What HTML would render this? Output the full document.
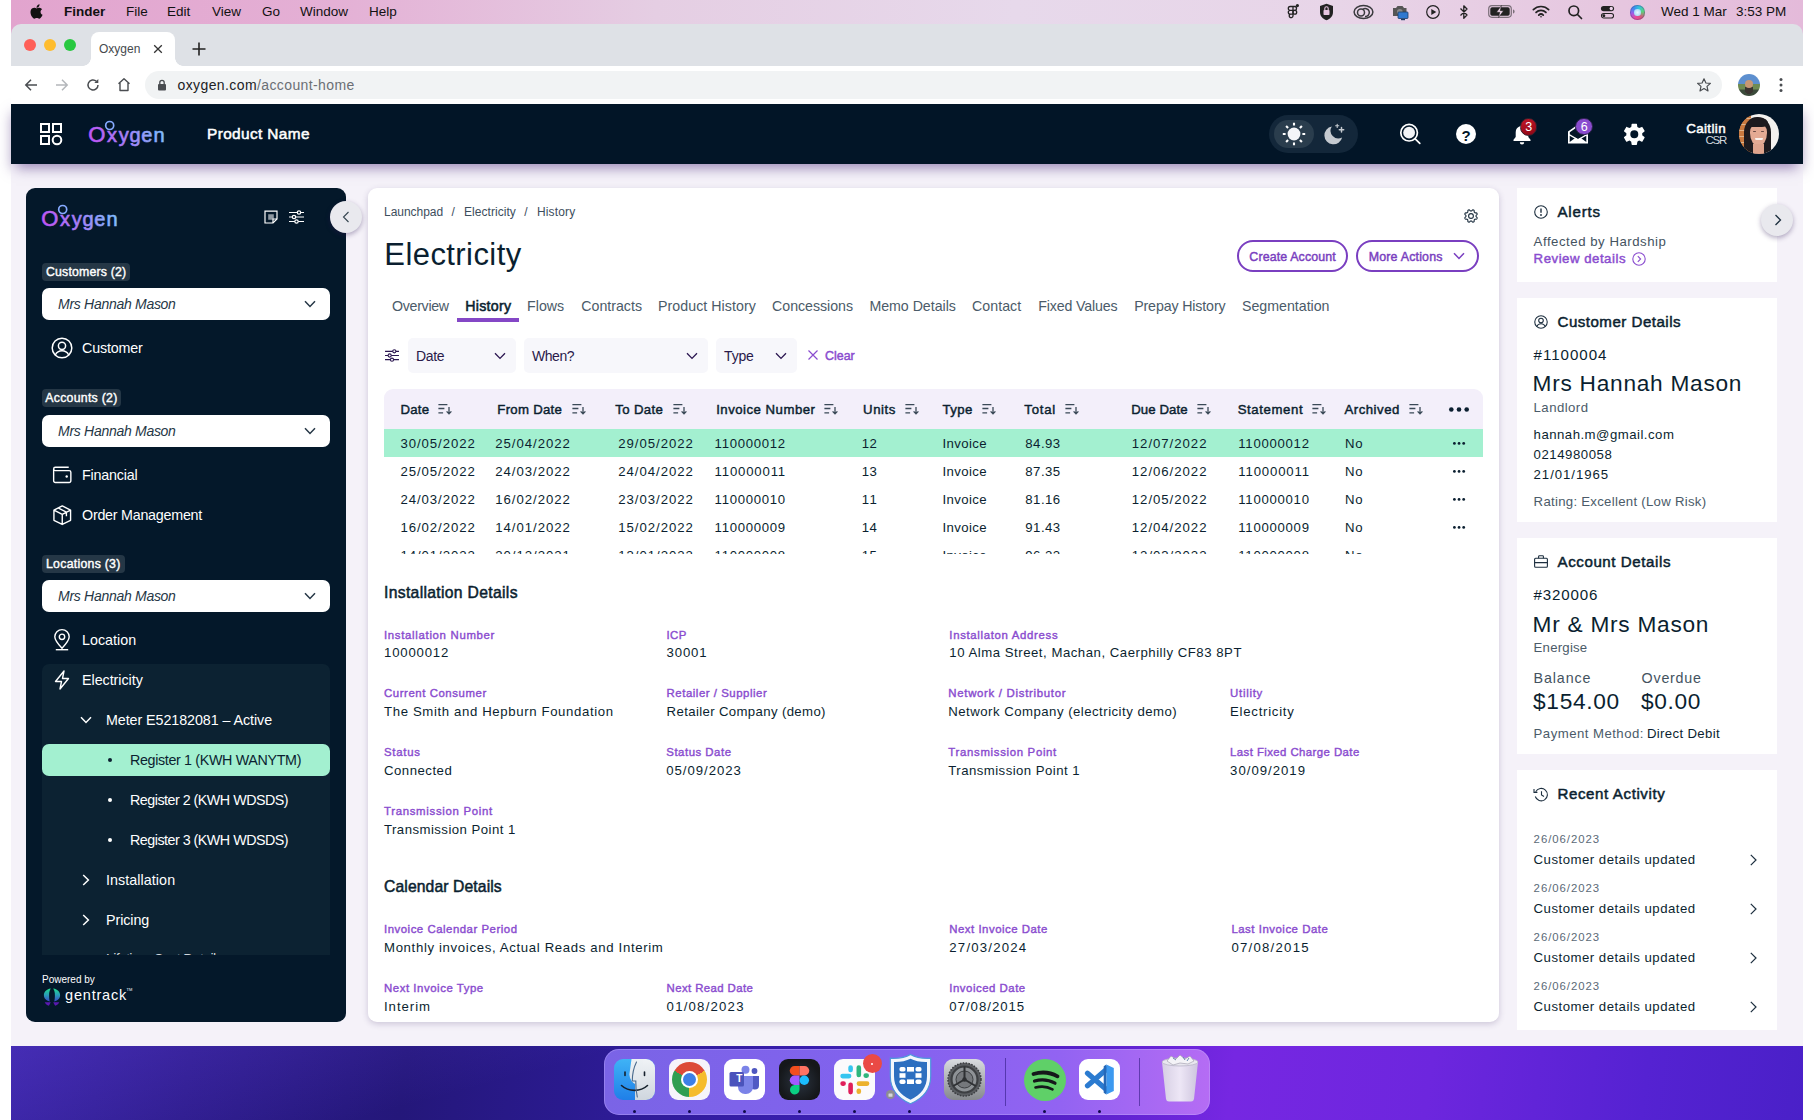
<!DOCTYPE html>
<html lang="en">
<head>
<meta charset="utf-8">
<title>Oxygen</title>
<style>
*{box-sizing:border-box;margin:0;padding:0}
html,body{width:1814px;height:1120px;overflow:hidden;background:#fff}
body{position:relative;font-family:"Liberation Sans",sans-serif;color:#0b1f30;font-size:14px;-webkit-font-smoothing:antialiased}
.a{position:absolute;white-space:nowrap}
.t{position:absolute;white-space:nowrap;line-height:1;transform:translateY(-50%)}
svg{position:absolute;overflow:visible}
#screen{position:absolute;left:11px;top:0;width:1792px;height:1120px;overflow:hidden;background:#f5f2f9}
/* mac menu */
#menubar{left:11px;top:0;width:1792px;height:24px;background:linear-gradient(90deg,#e2a4ce 0%,#e4b0d5 18%,#e5cee3 36%,#e7d9eb 56%,#e8d5e8 74%,#e6c6df 90%,#e4bada 100%)}
.mm{font-size:13.5px;color:#111;top:12px}
/* chrome */
#tabbar{left:11px;top:24px;width:1792px;height:42px;background:#dee1e6;border-radius:10px 10px 0 0}
#addr{left:11px;top:66px;width:1792px;height:38px;background:#fff}
#apphead{left:11px;top:104px;width:1792px;height:60px;background:#021527;box-shadow:0 9px 12px -5px rgba(80,50,130,.55)}
/* sidebar */
#side{left:26px;top:188px;width:320px;height:834px;background:#04182a;border-radius:9px}
.badge{position:absolute;height:18px;border-radius:4px;background:#253746;color:#fff;-webkit-text-stroke:.4px;font-size:12.3px;line-height:18px;padding:0 4px;white-space:nowrap}
.sel{position:absolute;left:42px;width:288px;height:32px;border-radius:7px;background:#fff}
.sel span{position:absolute;left:16px;top:16px;transform:translateY(-50%);font-style:italic;font-size:14px;color:#263746;line-height:1;white-space:nowrap}
.nav{color:#fff;font-size:14.3px;margin-top:.2px}
/* main */
#main{left:368px;top:188px;width:1131px;height:834px;background:#fff;border-radius:9px;box-shadow:0 2px 6px rgba(60,40,100,.22)}
.tab{font-size:14.2px;color:#4b5b69;top:306px}
.fsel{position:absolute;top:338px;height:34.7px;border-radius:5px;background:#f7f7fb}
.fsel span{position:absolute;left:8px;top:17.7px;transform:translateY(-50%);white-space:nowrap;font-size:14px;color:#2a1a4a;line-height:1}
.th{margin-top:.5px;-webkit-text-stroke:.45px;font-size:13.2px;color:#0b1f30}
.td{margin-top:.5px;font-size:13.2px;color:#0b1f30}
.lb{margin-top:.5px;font-size:11.4px;-webkit-text-stroke:.4px;color:#8a4ccf}
.vl{margin-top:.5px;font-size:13.2px;color:#0b1f30}
.h2{font-size:15.7px;-webkit-text-stroke:.5px;color:#0b1f30}
/* right */
.card{position:absolute;left:1517px;width:260px;background:#fff}
.ch{font-size:15.1px;-webkit-text-stroke:.5px;color:#0b1f30}
.gr{color:#4b5b69}
</style>
</head>
<body>
<div class="a" style="left:13px;top:108px;width:1788px;height:54px;box-shadow:0 6px 12px 1px rgba(80,50,130,.5)"></div>
<div id="screen"><div id="in" class="a" style="left:-11px;top:0;width:1814px;height:1120px">

<div id="menubar" class="a"></div>
<svg style="left:29px;top:3px" width="15" height="17" viewBox="0 0 170 170"><path fill="#111" d="M150.37 130.25c-2.45 5.66-5.35 10.87-8.71 15.66-4.58 6.53-8.33 11.05-11.22 13.56-4.48 4.12-9.28 6.23-14.42 6.35-3.69 0-8.14-1.05-13.32-3.18-5.197-2.12-9.973-3.17-14.34-3.17-4.58 0-9.492 1.05-14.746 3.17-5.262 2.13-9.501 3.24-12.742 3.35-4.929.21-9.842-1.96-14.746-6.52-3.13-2.73-7.045-7.41-11.735-14.04-5.032-7.08-9.169-15.29-12.41-24.65-3.471-10.11-5.211-19.9-5.211-29.378 0-10.857 2.346-20.221 7.045-28.068 3.693-6.303 8.606-11.275 14.755-14.925s12.793-5.51 19.948-5.629c3.915 0 9.049 1.211 15.429 3.591 6.362 2.388 10.447 3.599 12.238 3.599 1.339 0 5.877-1.416 13.57-4.239 7.275-2.618 13.415-3.702 18.445-3.275 13.63 1.1 23.87 6.473 30.68 16.153-12.19 7.386-18.22 17.731-18.1 31.002.11 10.337 3.86 18.939 11.23 25.769 3.34 3.17 7.07 5.62 11.22 7.36-.9 2.61-1.85 5.11-2.86 7.51zM119.11 7.24c0 8.102-2.96 15.667-8.86 22.669-7.12 8.324-15.732 13.134-25.071 12.375a25.222 25.222 0 0 1-.188-3.07c0-7.778 3.386-16.102 9.399-22.908 3.002-3.446 6.82-6.311 11.45-8.597 4.62-2.252 8.99-3.497 13.1-3.71.12 1.083.17 2.166.17 3.24z"/></svg>
<span class="t mm" style="left:64px;font-weight:bold">Finder</span>
<span class="t mm" style="left:126px">File</span>
<span class="t mm" style="left:167px">Edit</span>
<span class="t mm" style="left:212px">View</span>
<span class="t mm" style="left:262px">Go</span>
<span class="t mm" style="left:300px">Window</span>
<span class="t mm" style="left:369px">Help</span>
<!-- menubar status icons -->
<svg style="left:1284px;top:3px" width="18" height="18" viewBox="0 0 18 18" fill="none" stroke="#222" stroke-width="1.3"><path d="M9 3.5H6.2a1.9 1.9 0 0 0 0 3.8H9zM9 3.5h1.6a1.9 1.9 0 0 1 0 3.8H9M9 7.3H6.2a1.9 1.9 0 0 0 0 3.8H9zM9 11.1H6.2A1.9 1.9 0 1 0 9 13z"/><circle cx="10.8" cy="9.2" r="1.9"/><circle cx="13.4" cy="2.6" r="1.6" fill="#222" stroke="none"/></svg>
<svg style="left:1318px;top:3px" width="17" height="18" viewBox="0 0 17 18"><path d="M8.5 0.8 15 3v6c0 4.2-3 7-6.5 8.3C5 16 2 13.2 2 9V3z" fill="#222"/><rect x="5.5" y="7" width="6" height="5" rx=".8" fill="#e7c5e0"/><path d="M6.8 7V5.5a1.7 1.7 0 0 1 3.4 0V7" fill="none" stroke="#e7c5e0" stroke-width="1.1"/></svg>
<svg style="left:1353px;top:4px" width="21" height="16" viewBox="0 0 21 16" fill="none" stroke="#3a3a3e" stroke-width="1.5"><ellipse cx="10.5" cy="8" rx="9.4" ry="6.6"/><circle cx="8" cy="8.4" r="3.5"/><path d="M9.7 5.5a4 4 0 1 1 2.3 7"/></svg>
<svg style="left:1390px;top:3px" width="20" height="18" viewBox="0 0 20 18"><path d="M3 5h3l1.5-2h5L14 5h2.5v8H3z" fill="#555"/><circle cx="9.8" cy="8.8" r="2.8" fill="#8a8a8a"/><rect x="8" y="9" width="10" height="6.5" rx=".8" fill="#2f78d0" stroke="#1d3c66" stroke-width=".8"/><rect x="11" y="16" width="4" height="1.2" fill="#1d3c66"/></svg>
<svg style="left:1425px;top:4px" width="16" height="16" viewBox="0 0 16 16"><circle cx="8" cy="8" r="6.3" fill="none" stroke="#222" stroke-width="1.2"/><path d="M6.3 5v6l5-3z" fill="#222"/></svg>
<svg style="left:1459px;top:3px" width="10" height="18" viewBox="0 0 10 18" fill="none" stroke="#222" stroke-width="1.3" stroke-linejoin="round"><path d="M1.5 5.5 8 12l-3.2 3.2V2.8L8 6l-6.5 6.5"/></svg>
<svg style="left:1488px;top:5px" width="28" height="14" viewBox="0 0 28 14"><rect x=".7" y=".7" width="22.6" height="11.6" rx="3.2" fill="none" stroke="#222" stroke-width="1.2" opacity=".55"/><rect x="2.3" y="2.3" width="19.4" height="8.4" rx="1.8" fill="#222"/><path d="M25 4.5v4c1.2-.3 1.6-1.2 1.6-2s-.4-1.7-1.6-2z" fill="#222" opacity=".55"/><path d="M13.5.5 8.5 7.3h3.3L10.5 12.5l5-6.8h-3.3z" fill="#f0d6ea" stroke="#222" stroke-width=".5"/></svg>
<svg style="left:1532px;top:4.5px" width="18" height="13.5" viewBox="0 0 20 15" fill="none" stroke="#222" stroke-width="1.9" stroke-linecap="round"><path d="M1.5 5.2a12 12 0 0 1 17 0"/><path d="M4.5 8.3a7.8 7.8 0 0 1 11 0"/><path d="M7.5 11.2a3.6 3.6 0 0 1 5 0" /><circle cx="10" cy="13" r=".9" fill="#222" stroke="none"/></svg>
<svg style="left:1567px;top:4px" width="16" height="16" viewBox="0 0 16 16" fill="none" stroke="#222" stroke-width="1.7" stroke-linecap="round"><circle cx="6.8" cy="6.8" r="4.8"/><path d="M10.5 10.5 14.5 14.5"/></svg>
<svg style="left:1600px;top:5px" width="15" height="14" viewBox="0 0 17 16"><rect x="1" y="1" width="15" height="6" rx="3" fill="#222"/><circle cx="12.8" cy="4" r="1.9" fill="#ecd3ea"/><rect x="1.6" y="9.6" width="13.8" height="5.2" rx="2.6" fill="none" stroke="#222" stroke-width="1.2"/><circle cx="4.3" cy="12.2" r="1.7" fill="#222"/></svg>
<div class="a" style="left:1630px;top:5px;width:14.5px;height:14.5px;border-radius:50%;background:conic-gradient(from 200deg,#e94a9a,#a05be8,#3a8df0,#35c8d8,#5ad37a,#d8567a,#e94a9a);box-shadow:inset 0 0 0 1px rgba(80,50,120,.35)"></div>
<div class="a" style="left:1634px;top:9px;width:6.5px;height:6.5px;border-radius:50%;background:radial-gradient(circle,#e8f6ff,#8fd0f4)"></div>
<span class="t mm" style="left:1661px">Wed 1 Mar</span>
<span class="t mm" style="left:1736px">3:53 PM</span>
<!-- chrome -->
<div class="a" style="left:11px;top:24px;width:1792px;height:12px;background:linear-gradient(90deg,#e2a4ce 0%,#e4b0d5 18%,#e5cee3 36%,#e7d9eb 56%,#e8d5e8 74%,#e6c6df 90%,#e4bada 100%)"></div>
<div id="tabbar" class="a"></div>
<div class="a" style="left:24px;top:39px;width:12px;height:12px;border-radius:50%;background:#fe5f57"></div>
<div class="a" style="left:44px;top:39px;width:12px;height:12px;border-radius:50%;background:#febc2e"></div>
<div class="a" style="left:64px;top:39px;width:12px;height:12px;border-radius:50%;background:#28c840"></div>
<div class="a" style="left:91px;top:32px;width:84px;height:34px;background:#fff;border-radius:8px 8px 0 0"></div>
<div class="a" style="left:83px;top:58px;width:8px;height:8px;background:radial-gradient(circle at 0 0,#dee1e6 7.5px,#fff 8px)"></div>
<div class="a" style="left:175px;top:58px;width:8px;height:8px;background:radial-gradient(circle at 100% 0,#dee1e6 7.5px,#fff 8px)"></div>
<span class="t" style="left:99px;top:49px;font-size:12px;color:#45494d">Oxygen</span>
<svg style="left:153px;top:44px" width="10" height="10" viewBox="0 0 10 10" stroke="#333" stroke-width="1.3"><path d="M1.2 1.2 8.8 8.8M8.8 1.2 1.2 8.8"/></svg>
<svg style="left:192px;top:42px" width="14" height="14" viewBox="0 0 14 14" stroke="#222" stroke-width="1.6"><path d="M7 .5v13M.5 7h13"/></svg>
<div id="addr" class="a"></div>
<svg style="left:24px;top:78px" width="14" height="14" viewBox="0 0 14 14" fill="none" stroke="#4a4d51" stroke-width="1.5"><path d="M13 7H2M7 1.8 1.8 7 7 12.2"/></svg>
<svg style="left:55px;top:78px" width="14" height="14" viewBox="0 0 14 14" fill="none" stroke="#b4b7bb" stroke-width="1.5"><path d="M1 7h11M7 1.8 12.2 7 7 12.2"/></svg>
<svg style="left:86px;top:78px" width="14" height="14" viewBox="0 0 14 14" fill="none" stroke="#4a4d51" stroke-width="1.5"><path d="M12 7a5 5 0 1 1-1.6-3.7"/><path d="M12.3 1v4h-4z" fill="#4a4d51" stroke="none"/></svg>
<svg style="left:117px;top:77px" width="14" height="15" viewBox="0 0 14 15" fill="none" stroke="#4a4d51" stroke-width="1.4" stroke-linejoin="round"><path d="M1.5 6.8 7 1.8l5.5 5M3 6v7.5h8V6"/></svg>
<div class="a" style="left:145px;top:71px;width:1577px;height:28px;border-radius:14px;background:#f1f3f4"></div>
<svg style="left:157px;top:79px" width="10" height="12" viewBox="0 0 10 12"><rect x="1" y="5" width="8" height="6.5" rx="1" fill="#4a4d51"/><path d="M2.8 5V3.5a2.2 2.2 0 0 1 4.4 0V5" fill="none" stroke="#4a4d51" stroke-width="1.3"/></svg>
<span class="t" style="left:177.5px;top:85px;font-size:14px;color:#202124;letter-spacing:0.396px">oxygen.com<span style="color:#6b6f74">/account-home</span></span>
<svg style="left:1696px;top:77px" width="16" height="16" viewBox="0 0 16 16" fill="none" stroke="#4a4d51" stroke-width="1.2" stroke-linejoin="round"><path d="M8 1.8 9.9 6l4.5.4-3.4 3 1 4.5L8 11.5 4 13.9l1-4.5L1.6 6.4 6.1 6z"/></svg>
<div class="a" style="left:1738px;top:74px;width:22px;height:22px;border-radius:50%;background:radial-gradient(circle at 50% 72%,#3a3430 0 22%,transparent 23%),linear-gradient(#5d8fcf 0 45%,#6f8b52 46% 70%,#3b4a3a 71%)"></div>
<div class="a" style="left:1745px;top:80px;width:8px;height:8px;border-radius:50%;background:#c99874"></div>
<svg style="left:1779px;top:77px" width="4" height="16" viewBox="0 0 4 16" fill="#4a4d51"><circle cx="2" cy="2.5" r="1.5"/><circle cx="2" cy="8" r="1.5"/><circle cx="2" cy="13.5" r="1.5"/></svg>
<!--OSCHROME-->

<div id="apphead" class="a"></div>
<svg style="left:39px;top:122px" width="24" height="24" viewBox="0 0 24 24" fill="none" stroke="#fff" stroke-width="2"><rect x="2" y="2" width="8" height="8"/><rect x="14" y="2" width="8" height="8"/><rect x="2" y="14" width="8" height="8"/><circle cx="18" cy="18" r="4.3"/></svg>
<svg style="left:86px;top:116px" width="84" height="36" viewBox="86 116 84 36"><defs><linearGradient id="og" gradientUnits="userSpaceOnUse" x1="88" y1="150" x2="164" y2="122"><stop offset="0" stop-color="#c44df2"/><stop offset=".45" stop-color="#a87cf7"/><stop offset="1" stop-color="#7cc4ff"/></linearGradient></defs>
<text x="88.3 107 118.7 129.6 141.3 153.4" y="141.6" font-family="Liberation Sans, sans-serif" font-size="20" fill="url(#og)" stroke="url(#og)" stroke-width=".6"><tspan font-size="22">O</tspan>xygen</text>
<circle cx="109.7" cy="125.5" r="4" fill="none" stroke="#86aaff" stroke-width="1.7"/></svg>
<span class="t" style="left:207px;top:134px;font-size:15.4px;-webkit-text-stroke:.5px;color:#fff;letter-spacing:0.375px">Product Name</span>
<!-- theme toggle -->
<div class="a" style="left:1269px;top:115px;width:89px;height:38px;border-radius:19px;background:#13273a"></div>
<div class="a" style="left:1274px;top:119.7px;width:40px;height:28.8px;border-radius:14.4px;background:#2a3d4d"></div>
<svg style="left:1282px;top:122px" width="24" height="24" viewBox="-12 -12 24 24" stroke="#fff" stroke-width="2.1"><circle r="6.4" fill="#f4f5f8" stroke="none"/><path d="M0-8.4V-11.2M0 8.4V11.2M-8.4 0H-11.2M8.4 0H11.2M-5.9-5.9-7.9-7.9M5.9-5.9 7.9-7.9M-5.9 5.9-7.9 7.9M5.9 5.9 7.9 7.9"/></svg>
<svg style="left:1322px;top:122px" width="24" height="24" viewBox="-12 -12 24 24"><path d="M-2.2-7.560A9 9 0 1 0 8.140 3.440 7.8 7.8 0 0 1-2.2-7.560z" fill="#c5cad0"/><path d="M3.2-9.8v3.2M1.6-8.2h3.2" stroke="#c5cad0" stroke-width="1.1" stroke-linecap="round"/><path d="M7.5-6.4v4.4M5.3-4.2h4.4" stroke="#c5cad0" stroke-width="1.5" stroke-linecap="round"/></svg>
<svg style="left:1398px;top:122px" width="24" height="24" viewBox="-12 -12 24 24" fill="none" stroke="#fff"><circle cx="-.9" cy="-1.3" r="8.3" stroke-width="1.7"/><circle cx="-.9" cy="-1.3" r="5.9" fill="#f2f3f6" stroke="none"/><path d="M5.2 4.8 9.8 9.4" stroke-width="1.7" stroke-linecap="round"/></svg>
<div class="a" style="left:1456px;top:124px;width:20px;height:20px;border-radius:50%;background:#fff"></div>
<span class="t" style="left:1461.5px;top:134.5px;font-size:15px;font-weight:bold;color:#021527">?</span>
<svg style="left:1510px;top:122px" width="24" height="24" viewBox="-12 -12 24 24" fill="#fff"><path d="M0-9.5c.9 0 1.5.6 1.5 1.4 3 .8 4.8 3.2 4.8 6.3V3L8.5 5.8V7H-8.5V5.8L-6.3 3V-1.8c0-3.1 1.8-5.5 4.8-6.3 0-.8.6-1.4 1.5-1.4zM-2.2 8.3h4.4a2.2 2.2 0 0 1-4.4 0z"/></svg>
<div class="a" style="left:1519.7px;top:117.9px;width:17.8px;height:17.8px;border-radius:50%;background:linear-gradient(160deg,#c4182a,#8c0514);border:1.2px solid #35222e"></div>
<span class="t" style="left:1525.3px;top:127px;font-size:12.5px;color:#fff">3</span>
<svg style="left:1566px;top:122px" width="24" height="24" viewBox="-12 -12 24 24" fill="#fff"><path d="M-10-2.5 0-9.5 10-2.5V9.5H-10zM-8.2-1.8V.2L0 5 8.2.2V-1.8L0-7.5z" fill-rule="evenodd"/><path d="M-8.3 1.8 0 6.6 8.3 1.8V8H-8.3z" fill="#021527"/><path d="M-8.3 8 -2.5 3.8 0 5.2 2.5 3.8 8.3 8z" fill="#fff"/></svg>
<div class="a" style="left:1575.2px;top:117.7px;width:17.8px;height:17.8px;border-radius:50%;background:#8a4ccf;border:1.2px solid #2a2148"></div>
<span class="t" style="left:1580.7px;top:126.8px;font-size:12.5px;color:#fff">6</span>
<svg style="left:1620.7px;top:120.9px" width="26.6" height="26.6" viewBox="0 0 24 24"><path fill="#fff" d="M19.14 12.94c.04-.3.06-.61.06-.94 0-.32-.02-.64-.07-.94l2.03-1.58a.49.49 0 0 0 .12-.61l-1.92-3.32a.488.488 0 0 0-.59-.22l-2.39.96c-.5-.38-1.03-.7-1.62-.94l-.36-2.54a.484.484 0 0 0-.48-.41h-3.84c-.24 0-.43.17-.47.41l-.36 2.54c-.59.24-1.13.57-1.62.94l-2.39-.96c-.22-.08-.47 0-.59.22L2.74 8.87c-.12.21-.08.47.12.61l2.03 1.58c-.05.3-.09.63-.09.94s.02.64.07.94l-2.03 1.58a.49.49 0 0 0-.12.61l1.92 3.32c.12.22.37.29.59.22l2.39-.96c.5.38 1.03.7 1.62.94l.36 2.54c.05.24.24.41.48.41h3.84c.24 0 .44-.17.47-.41l.36-2.54c.59-.24 1.13-.56 1.62-.94l2.39.96c.22.08.47 0 .59-.22l1.92-3.32c.12-.22.07-.47-.12-.61l-2.01-1.58zM12 15.6A3.6 3.6 0 1 1 12 8.4a3.6 3.6 0 0 1 0 7.2z"/></svg>
<span class="t" style="right:88px;top:128.7px;font-size:13.4px;-webkit-text-stroke:.5px;color:#fff;letter-spacing:0.380px">Caitlin</span>
<span class="t" style="right:88px;top:140.7px;font-size:11.5px;color:#d4d9df;letter-spacing:-1.291px">CSR</span>
<div class="a" style="left:1739px;top:114px;width:40px;height:40px;border-radius:50%;overflow:hidden;background:linear-gradient(90deg,#c47a45 0 30%,#f3f1ef 30% 100%)">
<div class="a" style="left:0;top:0;width:12px;height:40px;background:repeating-linear-gradient(0deg,#c9793f 0 5px,#e0b48a 5px 6px)"></div>
<div class="a" style="left:5px;top:2.5px;width:26.5px;height:44px;border-radius:13px 13px 4px 4px / 15px 15px 4px 4px;background:#1d1a1e"></div>
<div class="a" style="left:11px;top:9px;width:17px;height:23px;border-radius:8px 8px 8.5px 8.5px / 9px 9px 13px 13px;background:#e4aa93"></div>
<div class="a" style="left:10px;top:4px;width:19px;height:8.5px;border-radius:10px 10px 9px 2px / 8px 8px 5px 2px;background:#1d1a1e"></div>
<div class="a" style="left:14px;top:30px;width:11px;height:12px;background:#dfa48d"></div>
<div class="a" style="left:16px;top:23.5px;width:7.5px;height:2.6px;border-radius:1px 1px 4px 4px;background:#fbf3ee"></div>
<div class="a" style="left:14px;top:17px;width:3px;height:1.4px;background:#6a4a44;border-radius:1px"></div><div class="a" style="left:22px;top:17px;width:3px;height:1.4px;background:#6a4a44;border-radius:1px"></div>
</div>
<!--APPHEAD-->

<div id="side" class="a"></div>
<svg style="left:39.2px;top:199.7px" width="84" height="36" viewBox="86 116 84 36"><text x="88.3 107 118.7 129.6 141.3 153.4" y="141.6" font-family="Liberation Sans, sans-serif" font-size="20" fill="url(#og)" stroke="url(#og)" stroke-width=".6"><tspan font-size="22">O</tspan>xygen</text>
<circle cx="109.7" cy="125.5" r="4" fill="none" stroke="#86aaff" stroke-width="1.7"/></svg>
<svg style="left:264px;top:210px" width="14" height="14" viewBox="0 0 14 14" fill="none" stroke="#fff" stroke-width="1.2"><path d="M1 1.2h12v7.8L9 13H1z"/><path d="M4.2 4.2h5.6v4.2L8.4 9.8H4.2z" fill="#8f98a1" stroke="none"/><path d="M13 9H9v4" /></svg>
<svg style="left:289px;top:210px" width="15" height="14" viewBox="0 0 15 14" fill="none" stroke="#fff" stroke-width="1.2"><path d="M0 2.5h8.3M11.7 2.5H15M0 7h3.3M6.7 7H15M0 11.5h5.8M9.2 11.5H15"/><circle cx="10" cy="2.5" r="1.7"/><circle cx="5" cy="7" r="1.7"/><circle cx="7.5" cy="11.5" r="1.7"/></svg>
<div class="a" style="left:330px;top:201px;width:32px;height:32px;border-radius:50%;background:#e9e9ee;box-shadow:0 2px 5px rgba(40,20,80,.35)"></div>
<svg style="left:342px;top:211px" width="8" height="12" viewBox="0 0 8 12" fill="none" stroke="#34444f" stroke-width="1.1"><path d="M6.5 1 1.5 6l5 5"/></svg>
<div class="badge" style="left:42px;top:263px;width:88px"><span class="t" style="left:4px;top:9px;letter-spacing:0.191px">Customers (2)</span></div>
<div class="sel" style="top:288px"><span style="letter-spacing:-0.285px">Mrs Hannah Mason</span></div><svg style="left:304px;top:300px" width="12" height="8" viewBox="0 0 12 8" fill="none" stroke="#263746" stroke-width="1.5"><path d="M1 1.2 6 6.4 11 1.2"/></svg>
<svg style="left:51px;top:337px" width="22" height="22" viewBox="0 0 22 22" fill="none" stroke="#fff" stroke-width="1.5"><circle cx="11" cy="11" r="9.8"/><circle cx="11" cy="8.8" r="3.6"/><path d="M4.3 18a7.5 7.5 0 0 1 13.4 0"/></svg>
<span class="t nav" style="left:82px;top:348px;letter-spacing:-0.169px">Customer</span>
<div class="badge" style="left:42px;top:388.5px;width:79px"><span class="t" style="left:3.3px;top:9px;letter-spacing:0.270px">Accounts (2)</span></div>
<div class="sel" style="top:415px"><span style="letter-spacing:-0.285px">Mrs Hannah Mason</span></div><svg style="left:304px;top:427px" width="12" height="8" viewBox="0 0 12 8" fill="none" stroke="#263746" stroke-width="1.5"><path d="M1 1.2 6 6.4 11 1.2"/></svg>
<svg style="left:52.8px;top:466.2px" width="18.5" height="17.6" viewBox="0 0 20 19" fill="none" stroke="#fff" stroke-width="1.5"><path d="M.7 3.2V16a1.8 1.8 0 0 0 1.8 1.8h15a1.8 1.8 0 0 0 1.8-1.8V6.8A1.8 1.8 0 0 0 17.5 5H2.5A1.8 1.8 0 0 1 .7 3.2 1.8 1.8 0 0 1 2.5 1.4H17"/><circle cx="14.8" cy="11.4" r="1.3" fill="#fff" stroke="none"/></svg>
<span class="t nav" style="left:82px;top:475px;letter-spacing:-0.190px">Financial</span>
<svg style="left:52.8px;top:504.6px" width="18.5" height="20.4" viewBox="0 0 20 22" fill="none" stroke="#fff" stroke-width="1.5" stroke-linejoin="round"><path d="M10 1 19 5.5v11L10 21 1 16.5v-11zM1 5.5 10 10l9-4.5M10 10v11M5.5 3.2l9 4.5v4.5"/></svg>
<span class="t nav" style="left:82px;top:515px;letter-spacing:-0.245px">Order Management</span>
<div class="badge" style="left:42px;top:555px;width:83px"><span class="t" style="left:4px;top:9px;letter-spacing:0.267px">Locations (3)</span></div>
<div class="sel" style="top:580px"><span style="letter-spacing:-0.285px">Mrs Hannah Mason</span></div><svg style="left:304px;top:592px" width="12" height="8" viewBox="0 0 12 8" fill="none" stroke="#263746" stroke-width="1.5"><path d="M1 1.2 6 6.4 11 1.2"/></svg>
<svg style="left:53px;top:629px" width="18" height="22" viewBox="0 0 18 22" fill="none" stroke="#fff" stroke-width="1.4"><path d="M9 19.3C4.6 14.6 1.8 11.5 1.8 7.8a7.2 7.2 0 0 1 14.4 0c0 3.7-2.8 6.8-7.2 11.5z"/><circle cx="9" cy="7.8" r="2.7"/><path d="M2.8 20.7h12.4"/></svg>
<span class="t nav" style="left:82px;top:640px;letter-spacing:0.005px">Location</span>
<div class="a" style="left:42px;top:664px;width:288px;height:291px;background:#0c2232;border-radius:7px 7px 0 0;overflow:hidden">
<span class="t nav" style="left:64px;top:294.4px;letter-spacing:-0.730px;color:#cfd6dc">Lifetime Cost Details</span>
</div>
<svg style="left:54px;top:670px" width="16" height="20" viewBox="0 0 16 20" fill="none" stroke="#fff" stroke-width="1.4" stroke-linejoin="round"><path d="M10 1 1.5 11.5h6L6 19l8.5-10.5h-6z"/></svg>
<span class="t nav" style="left:82px;top:680px;letter-spacing:-0.037px">Electricity</span>
<svg style="left:80px;top:716px" width="12" height="8" viewBox="0 0 12 8" fill="none" stroke="#fff" stroke-width="1.5"><path d="M1 1.2 6 6.4 11 1.2"/></svg>
<span class="t nav" style="left:106px;top:720px;letter-spacing:-0.070px">Meter E52182081 – Active</span>
<div class="a" style="left:42px;top:744px;width:288px;height:32px;border-radius:7px;background:#a3f0d0"></div>
<div class="a" style="left:108px;top:758px;width:4px;height:4px;border-radius:50%;background:#0b1f30"></div>
<span class="t nav" style="left:130px;top:760px;color:#0b1f30;letter-spacing:-0.345px">Register 1 (KWH WANYTM)</span>
<div class="a" style="left:108px;top:798px;width:4px;height:4px;border-radius:50%;background:#fff"></div>
<span class="t nav" style="left:130px;top:800px;letter-spacing:-0.505px">Register 2 (KWH WDSDS)</span>
<div class="a" style="left:108px;top:838px;width:4px;height:4px;border-radius:50%;background:#fff"></div>
<span class="t nav" style="left:130px;top:840px;letter-spacing:-0.505px">Register 3 (KWH WDSDS)</span>
<svg style="left:82px;top:874px" width="8" height="12" viewBox="0 0 8 12" fill="none" stroke="#fff" stroke-width="1.5"><path d="M1.2 1 6.4 6l-5.2 5"/></svg>
<span class="t nav" style="left:106px;top:880px;letter-spacing:0.067px">Installation</span>
<svg style="left:82px;top:914px" width="8" height="12" viewBox="0 0 8 12" fill="none" stroke="#fff" stroke-width="1.5"><path d="M1.2 1 6.4 6l-5.2 5"/></svg>
<span class="t nav" style="left:106px;top:920px;letter-spacing:-0.067px">Pricing</span>
<span class="t" style="left:42px;top:980.3px;font-size:10px;color:#fff;letter-spacing:-0.001px">Powered by</span>
<svg style="left:43px;top:988px" width="18" height="19" viewBox="0 0 18 19"><defs><linearGradient id="gt" x1="0" y1="0" x2="0" y2="1"><stop offset="0" stop-color="#1fdc8e"/><stop offset=".5" stop-color="#2a9bb8"/><stop offset="1" stop-color="#3a49c4"/></linearGradient></defs><path d="M7.8.6C3 1.3.9 4.4.9 7.2c0 2.7 1.9 5.4 5.9 6.2C6.2 11.6 6.1 9.3 6.1 7.2c0-2.3.4-4.7 1.7-6.6zM10.2.6c4.8.7 6.9 3.8 6.9 6.6 0 2.7-1.9 5.4-5.9 6.2.6-1.8.7-4.1.7-6.2 0-2.3-.4-4.7-1.7-6.6z" fill="url(#gt)"/><path d="M1.7 14.3h6.1l-1.9 3.4c-1.9-.5-3.3-1.7-4.2-3.4zM16.3 14.3h-6.1l1.9 3.4c1.9-.5 3.3-1.7 4.2-3.4z" fill="#5a18b0"/></svg>
<span class="t" style="left:65px;top:994.5px;font-size:14.5px;color:#fff;letter-spacing:0.811px">gentrack</span>
<span class="t" style="left:126.5px;top:990px;font-size:4px;color:#fff">TM</span>
<!--SIDEBAR-->
<div id="main" class="a"></div>
<svg width="0" height="0" style="left:0;top:0"><defs><g id="sort" fill="none" stroke="#3a4957" stroke-width="1.3"><path d="M.4.7h9M.4 4.5h6M.4 8.8h4.7M11 3v6.8M8.6 7.4 11 9.8l2.4-2.4"/></g><g id="dots" fill="#0b1f30"><circle cx="1.5" cy="1.5" r="1.5"/><circle cx="6.5" cy="1.5" r="1.5"/><circle cx="11.5" cy="1.5" r="1.5"/></g></defs></svg>
<span class="t " style="left:384px;top:212px;letter-spacing:-0.036px;font-size:12px;color:#3d4e5d">Launchpad</span>
<span class="t " style="left:451.5px;top:212px;font-size:12px;color:#3d4e5d">/</span>
<span class="t " style="left:464px;top:212px;letter-spacing:0.046px;font-size:12px;color:#3d4e5d">Electricity</span>
<span class="t " style="left:524.3px;top:212px;font-size:12px;color:#3d4e5d">/</span>
<span class="t " style="left:537px;top:212px;letter-spacing:0.143px;font-size:12px;color:#3d4e5d">History</span>
<svg style="left:1464px;top:209px" width="14" height="14" viewBox="0 0 14 14" fill="none" stroke="#1d2f3f" stroke-width="1.1" stroke-linejoin="round"><path d="M7.00 2.01 7.33 1.99 7.68 1.87 8.12 1.36 8.64 0.89 9.08 0.86 9.49 0.99 9.87 1.19 10.16 1.52 10.19 2.22 10.15 2.89 10.31 3.23 10.53 3.47 10.77 3.69 11.11 3.85 11.78 3.81 12.48 3.84 12.81 4.13 13.01 4.51 13.14 4.92 13.11 5.36 12.64 5.88 12.13 6.32 12.01 6.67 11.99 7.00 12.01 7.33 12.13 7.68 12.64 8.12 13.11 8.64 13.14 9.08 13.01 9.49 12.81 9.87 12.48 10.16 11.78 10.19 11.11 10.15 10.77 10.31 10.53 10.53 10.31 10.77 10.15 11.11 10.19 11.78 10.16 12.48 9.87 12.81 9.49 13.01 9.08 13.14 8.64 13.11 8.12 12.64 7.68 12.13 7.33 12.01 7.00 11.99 6.67 12.01 6.32 12.13 5.88 12.64 5.36 13.11 4.92 13.14 4.51 13.01 4.13 12.81 3.84 12.48 3.81 11.78 3.85 11.11 3.69 10.77 3.47 10.53 3.23 10.31 2.89 10.15 2.22 10.19 1.52 10.16 1.19 9.87 0.99 9.49 0.86 9.08 0.89 8.64 1.36 8.12 1.87 7.68 1.99 7.33 2.01 7.00 1.99 6.67 1.87 6.32 1.36 5.88 0.89 5.36 0.86 4.92 0.99 4.51 1.19 4.13 1.52 3.84 2.22 3.81 2.89 3.85 3.23 3.69 3.47 3.47 3.69 3.23 3.85 2.89 3.81 2.22 3.84 1.52 4.13 1.19 4.51 0.99 4.92 0.86 5.36 0.89 5.88 1.36 6.32 1.87 6.67 1.99z"/><circle cx="7" cy="7" r="2.4"/></svg>
<span class="t " style="left:384.3px;top:254.4px;letter-spacing:0.426px;font-size:31px;color:#0b1f30">Electricity</span>
<div class="a" style="left:1237px;top:240px;width:111px;height:32px;border:2px solid #7a3fc0;border-radius:16px"></div>
<span class="t " style="left:1249.3px;top:256.8px;letter-spacing:0.136px;font-size:12.4px;-webkit-text-stroke:.45px;color:#7a3fc0">Create Account</span>
<div class="a" style="left:1356px;top:240px;width:123px;height:32px;border:2px solid #7a3fc0;border-radius:16px"></div>
<span class="t " style="left:1368.7px;top:256.8px;letter-spacing:0.198px;font-size:12.4px;-webkit-text-stroke:.45px;color:#7a3fc0">More Actions</span>
<svg style="left:1453px;top:252px" width="12" height="8" viewBox="0 0 12 8" fill="none" stroke="#7a3fc0" stroke-width="1.5"><path d="M1 1.2 6 6.4 11 1.2"/></svg>
<span class="t tab" style="left:392.1px;top:306px;letter-spacing:-0.306px">Overview</span>
<span class="t tab" style="left:465.2px;top:306px;letter-spacing:0.274px;-webkit-text-stroke:.55px;color:#0b1f30">History</span>
<span class="t tab" style="left:527px;top:306px;letter-spacing:0.034px">Flows</span>
<span class="t tab" style="left:581.3px;top:306px;letter-spacing:-0.002px">Contracts</span>
<span class="t tab" style="left:658px;top:306px;letter-spacing:0.058px">Product History</span>
<span class="t tab" style="left:772.1px;top:306px;letter-spacing:-0.033px">Concessions</span>
<span class="t tab" style="left:869.4px;top:306px;letter-spacing:-0.021px">Memo Details</span>
<span class="t tab" style="left:972.1px;top:306px;letter-spacing:0.032px">Contact</span>
<span class="t tab" style="left:1038.2px;top:306px;letter-spacing:-0.152px">Fixed Values</span>
<span class="t tab" style="left:1134.2px;top:306px;letter-spacing:-0.127px">Prepay History</span>
<span class="t tab" style="left:1242px;top:306px;letter-spacing:-0.006px">Segmentation</span>
<div class="a" style="left:457px;top:318.4px;width:62px;height:3.6px;background:#8447c6"></div>
<svg style="left:385px;top:349px" width="14" height="13" viewBox="0 0 15 14" fill="none" stroke="#2b1650" stroke-width="1.2"><path d="M0 2.5h8.3M11.7 2.5H15M0 7h3.3M6.7 7H15M0 11.5h5.8M9.2 11.5H15"/><circle cx="10" cy="2.5" r="1.7"/><circle cx="5" cy="7" r="1.7"/><circle cx="7.5" cy="11.5" r="1.7"/></svg>
<div class="fsel" style="left:408px;width:108px"><span style="letter-spacing:-0.326px">Date</span></div>
<svg style="left:494px;top:351.5px" width="12" height="8" viewBox="0 0 12 8" fill="none" stroke="#2b1650" stroke-width="1.3"><path d="M1 1.2 6 6.4 11 1.2"/></svg>
<div class="fsel" style="left:524px;width:184px"><span style="letter-spacing:-0.465px">When?</span></div>
<svg style="left:686px;top:351.5px" width="12" height="8" viewBox="0 0 12 8" fill="none" stroke="#2b1650" stroke-width="1.3"><path d="M1 1.2 6 6.4 11 1.2"/></svg>
<div class="fsel" style="left:716px;width:81px"><span style="letter-spacing:-0.153px">Type</span></div>
<svg style="left:775px;top:351.5px" width="12" height="8" viewBox="0 0 12 8" fill="none" stroke="#2b1650" stroke-width="1.3"><path d="M1 1.2 6 6.4 11 1.2"/></svg>
<svg style="left:808px;top:350px" width="10" height="10" viewBox="0 0 10 10" stroke="#8a4ccf" stroke-width="1.2"><path d="M.5.5l9 9M9.5.5l-9 9"/></svg>
<span class="t " style="left:825px;top:356.1px;letter-spacing:0.023px;font-size:12.4px;-webkit-text-stroke:.45px;color:#8a4ccf">Clear</span>
<div class="a" style="left:384px;top:389px;width:1099px;height:165px;overflow:hidden;border-radius:9px 9px 0 0"><div class="a" style="left:0;top:0;width:1099px;height:40px;background:#f3effa"></div><div class="a" style="left:0;top:40px;width:1099px;height:28px;background:#a3f0d0"></div>
<span class="t th" style="left:16.4px;top:20.3px;letter-spacing:0.247px;top:20.3px">Date</span>
<svg style="left:54px;top:15px" width="14" height="11"><use href="#sort"/></svg>
<span class="t th" style="left:113.3px;top:20.3px;letter-spacing:0.288px;top:20.3px">From Date</span>
<svg style="left:187.7px;top:15px" width="14" height="11"><use href="#sort"/></svg>
<span class="t th" style="left:231.3px;top:20.3px;letter-spacing:0.341px;top:20.3px">To Date</span>
<svg style="left:288.6px;top:15px" width="14" height="11"><use href="#sort"/></svg>
<span class="t th" style="left:332.2px;top:20.3px;letter-spacing:0.495px;top:20.3px">Invoice Number</span>
<svg style="left:440.4px;top:15px" width="14" height="11"><use href="#sort"/></svg>
<span class="t th" style="left:479.1px;top:20.3px;letter-spacing:0.563px;top:20.3px">Units</span>
<svg style="left:521.1px;top:15px" width="14" height="11"><use href="#sort"/></svg>
<span class="t th" style="left:558.6px;top:20.3px;letter-spacing:0.369px;top:20.3px">Type</span>
<svg style="left:598px;top:15px" width="14" height="11"><use href="#sort"/></svg>
<span class="t th" style="left:640.3px;top:20.3px;letter-spacing:0.785px;top:20.3px">Total</span>
<svg style="left:681px;top:15px" width="14" height="11"><use href="#sort"/></svg>
<span class="t th" style="left:747.2px;top:20.3px;letter-spacing:0.097px;top:20.3px">Due Date</span>
<svg style="left:813px;top:15px" width="14" height="11"><use href="#sort"/></svg>
<span class="t th" style="left:853.7px;top:20.3px;letter-spacing:0.609px;top:20.3px">Statement</span>
<svg style="left:928.4px;top:15px" width="14" height="11"><use href="#sort"/></svg>
<span class="t th" style="left:960.5px;top:20.3px;letter-spacing:0.498px;top:20.3px">Archived</span>
<svg style="left:1025px;top:15px" width="14" height="11"><use href="#sort"/></svg>
<svg style="left:1065.4px;top:17.5px" width="20" height="5" viewBox="0 0 13 3"><use href="#dots"/></svg>
<span class="t td" style="left:16.4px;top:54.3px;letter-spacing:0.943px">30/05/2022</span>
<span class="t td" style="left:111.3px;top:54.3px;letter-spacing:0.954px">25/04/2022</span>
<span class="t td" style="left:234.3px;top:54.3px;letter-spacing:0.954px">29/05/2022</span>
<span class="t td" style="left:330.6px;top:54.3px;letter-spacing:0.696px">110000012</span>
<span class="t td" style="left:477.8px;top:54.3px;letter-spacing:0.328px">12</span>
<span class="t td" style="left:641.3px;top:54.3px;letter-spacing:0.471px">84.93</span>
<span class="t td" style="left:747.8px;top:54.3px;letter-spacing:0.965px">12/07/2022</span>
<span class="t td" style="left:854.3px;top:54.3px;letter-spacing:0.709px">110000012</span>
<span class="t td" style="left:558.6px;top:54.3px;letter-spacing:0.351px">Invoice</span>
<span class="t td" style="left:960.9000000000001px;top:54.3px;letter-spacing:0.741px">No</span>
<svg style="left:1069px;top:52.8px" width="13" height="3"><use href="#dots" transform="scale(.93)"/></svg>
<span class="t td" style="left:16.4px;top:82.3px;letter-spacing:0.943px">25/05/2022</span>
<span class="t td" style="left:111.3px;top:82.3px;letter-spacing:0.954px">24/03/2022</span>
<span class="t td" style="left:234.3px;top:82.3px;letter-spacing:0.954px">24/04/2022</span>
<span class="t td" style="left:330.6px;top:82.3px;letter-spacing:0.817px">110000011</span>
<span class="t td" style="left:477.8px;top:82.3px;letter-spacing:0.328px">13</span>
<span class="t td" style="left:641.3px;top:82.3px;letter-spacing:0.471px">87.35</span>
<span class="t td" style="left:747.8px;top:82.3px;letter-spacing:0.965px">12/06/2022</span>
<span class="t td" style="left:854.3px;top:82.3px;letter-spacing:0.830px">110000011</span>
<span class="t td" style="left:558.6px;top:82.3px;letter-spacing:0.351px">Invoice</span>
<span class="t td" style="left:960.9000000000001px;top:82.3px;letter-spacing:0.741px">No</span>
<svg style="left:1069px;top:80.8px" width="13" height="3"><use href="#dots" transform="scale(.93)"/></svg>
<span class="t td" style="left:16.4px;top:110.3px;letter-spacing:0.943px">24/03/2022</span>
<span class="t td" style="left:111.3px;top:110.3px;letter-spacing:0.954px">16/02/2022</span>
<span class="t td" style="left:234.3px;top:110.3px;letter-spacing:0.954px">23/03/2022</span>
<span class="t td" style="left:330.6px;top:110.3px;letter-spacing:0.696px">110000010</span>
<span class="t td" style="left:477.8px;top:110.3px;letter-spacing:1.297px">11</span>
<span class="t td" style="left:641.3px;top:110.3px;letter-spacing:0.471px">81.16</span>
<span class="t td" style="left:747.8px;top:110.3px;letter-spacing:0.965px">12/05/2022</span>
<span class="t td" style="left:854.3px;top:110.3px;letter-spacing:0.709px">110000010</span>
<span class="t td" style="left:558.6px;top:110.3px;letter-spacing:0.351px">Invoice</span>
<span class="t td" style="left:960.9000000000001px;top:110.3px;letter-spacing:0.741px">No</span>
<svg style="left:1069px;top:108.8px" width="13" height="3"><use href="#dots" transform="scale(.93)"/></svg>
<span class="t td" style="left:16.4px;top:138.3px;letter-spacing:0.943px">16/02/2022</span>
<span class="t td" style="left:111.3px;top:138.3px;letter-spacing:0.954px">14/01/2022</span>
<span class="t td" style="left:234.3px;top:138.3px;letter-spacing:0.954px">15/02/2022</span>
<span class="t td" style="left:330.6px;top:138.3px;letter-spacing:0.696px">110000009</span>
<span class="t td" style="left:477.8px;top:138.3px;letter-spacing:0.328px">14</span>
<span class="t td" style="left:641.3px;top:138.3px;letter-spacing:0.471px">91.43</span>
<span class="t td" style="left:747.8px;top:138.3px;letter-spacing:0.965px">12/04/2022</span>
<span class="t td" style="left:854.3px;top:138.3px;letter-spacing:0.709px">110000009</span>
<span class="t td" style="left:558.6px;top:138.3px;letter-spacing:0.351px">Invoice</span>
<span class="t td" style="left:960.9000000000001px;top:138.3px;letter-spacing:0.741px">No</span>
<svg style="left:1069px;top:136.8px" width="13" height="3"><use href="#dots" transform="scale(.93)"/></svg>
<span class="t td" style="left:16.4px;top:166.3px;letter-spacing:0.943px">14/01/2022</span>
<span class="t td" style="left:111.3px;top:166.3px;letter-spacing:0.954px">20/12/2021</span>
<span class="t td" style="left:234.3px;top:166.3px;letter-spacing:0.954px">13/01/2022</span>
<span class="t td" style="left:330.6px;top:166.3px;letter-spacing:0.696px">110000008</span>
<span class="t td" style="left:477.8px;top:166.3px;letter-spacing:0.328px">15</span>
<span class="t td" style="left:641.3px;top:166.3px;letter-spacing:0.471px">96.22</span>
<span class="t td" style="left:747.8px;top:166.3px;letter-spacing:0.965px">12/03/2022</span>
<span class="t td" style="left:854.3px;top:166.3px;letter-spacing:0.709px">110000008</span>
<span class="t td" style="left:558.6px;top:166.3px;letter-spacing:0.351px">Invoice</span>
<span class="t td" style="left:960.9000000000001px;top:166.3px;letter-spacing:0.741px">No</span>
<svg style="left:1069px;top:164.8px" width="13" height="3"><use href="#dots" transform="scale(.93)"/></svg>
</div>
<span class="t h2" style="left:384px;top:592.7px;letter-spacing:0.326px">Installation Details</span>
<span class="t lb" style="left:384px;top:635px;letter-spacing:0.681px">Installation Number</span>
<span class="t vl" style="left:384px;top:652.5px;letter-spacing:0.802px">10000012</span>
<span class="t lb" style="left:666.6px;top:635px;letter-spacing:0.350px">ICP</span>
<span class="t vl" style="left:666.6px;top:652.5px;letter-spacing:0.807px">30001</span>
<span class="t lb" style="left:949.3px;top:635px;letter-spacing:0.669px">Installaton Address</span>
<span class="t vl" style="left:949.3px;top:652.5px;letter-spacing:0.517px">10 Alma Street, Machan, Caerphilly CF83 8PT</span>
<span class="t lb" style="left:384px;top:693.9px;letter-spacing:0.566px">Current Consumer</span>
<span class="t vl" style="left:384px;top:711.4px;letter-spacing:0.627px">The Smith and Hepburn Foundation</span>
<span class="t lb" style="left:666.6px;top:693.9px;letter-spacing:0.531px">Retailer / Supplier</span>
<span class="t vl" style="left:666.6px;top:711.4px;letter-spacing:0.360px">Retailer Company (demo)</span>
<span class="t lb" style="left:948.3px;top:693.9px;letter-spacing:0.701px">Network / Distributor</span>
<span class="t vl" style="left:948.3px;top:711.4px;letter-spacing:0.481px">Network Company (electricity demo)</span>
<span class="t lb" style="left:1230.1px;top:693.9px;letter-spacing:0.726px">Utility</span>
<span class="t vl" style="left:1230.1px;top:711.4px;letter-spacing:0.728px">Electricity</span>
<span class="t lb" style="left:384px;top:752.7px;letter-spacing:0.741px">Status</span>
<span class="t vl" style="left:384px;top:770.2px;letter-spacing:0.500px">Connected</span>
<span class="t lb" style="left:666.3px;top:752.7px;letter-spacing:0.517px">Status Date</span>
<span class="t vl" style="left:666.3px;top:770.2px;letter-spacing:0.954px">05/09/2023</span>
<span class="t lb" style="left:948.3px;top:752.7px;letter-spacing:0.680px">Transmission Point</span>
<span class="t vl" style="left:948.3px;top:770.2px;letter-spacing:0.450px">Transmission Point 1</span>
<span class="t lb" style="left:1230.1px;top:752.7px;letter-spacing:0.423px">Last Fixed Charge Date</span>
<span class="t vl" style="left:1230.1px;top:770.2px;letter-spacing:0.987px">30/09/2019</span>
<span class="t lb" style="left:384px;top:811.6px;letter-spacing:0.686px">Transmission Point</span>
<span class="t vl" style="left:384px;top:829.1px;letter-spacing:0.455px">Transmission Point 1</span>
<span class="t h2" style="left:384px;top:887.4px;letter-spacing:0.114px">Calendar Details</span>
<span class="t lb" style="left:384px;top:929.7px;letter-spacing:0.519px">Invoice Calendar Period</span>
<span class="t vl" style="left:384px;top:947.2px;letter-spacing:0.650px">Monthly invoices, Actual Reads and Interim</span>
<span class="t lb" style="left:949.3px;top:929.7px;letter-spacing:0.506px">Next Invoice Date</span>
<span class="t vl" style="left:949.3px;top:947.2px;letter-spacing:1.209px">27/03/2024</span>
<span class="t lb" style="left:1231.4px;top:929.7px;letter-spacing:0.524px">Last Invoice Date</span>
<span class="t vl" style="left:1231.4px;top:947.2px;letter-spacing:1.243px">07/08/2015</span>
<span class="t lb" style="left:384px;top:988.6px;letter-spacing:0.554px">Next Invoice Type</span>
<span class="t vl" style="left:384px;top:1006.1px;letter-spacing:0.948px">Interim</span>
<span class="t lb" style="left:666.6px;top:988.6px;letter-spacing:0.396px">Next Read Date</span>
<span class="t vl" style="left:666.6px;top:1006.1px;letter-spacing:1.209px">01/08/2023</span>
<span class="t lb" style="left:949.3px;top:988.6px;letter-spacing:0.520px">Invoiced Date</span>
<span class="t vl" style="left:949.3px;top:1006.1px;letter-spacing:0.987px">07/08/2015</span>
<!--MAIN-->
<div class="card" style="top:188px;height:94px"></div><div class="card" style="top:298px;height:224px"></div><div class="card" style="top:538px;height:216px"></div><div class="card" style="top:770px;height:260px"></div>
<div class="a" style="left:1761px;top:204px;width:32px;height:32px;border-radius:50%;background:#e9e9ee;box-shadow:0 2px 5px rgba(40,20,80,.35)"></div>
<svg style="left:1773.5px;top:214px" width="8" height="12" viewBox="0 0 8 12" fill="none" stroke="#1d2f3f" stroke-width="1.3"><path d="M1.5 1 6.5 6l-5 5"/></svg>
<svg style="left:1534px;top:205px" width="14" height="14" viewBox="0 0 14 14" fill="none" stroke="#1d2f3f" stroke-width="1.1"><circle cx="7" cy="7" r="6.3"/><path d="M7 3.6v4.2" stroke-width="1.4"/><circle cx="7" cy="10" r=".9" fill="#1d2f3f" stroke="none"/></svg>
<span class="t ch" style="left:1557.5px;top:212.0px;letter-spacing:0.781px">Alerts</span>
<span class="t gr" style="left:1533.6px;top:241.9px;letter-spacing:0.532px;font-size:13.2px;color:#44535f">Affected by Hardship</span>
<span class="t " style="left:1533.6px;top:258.8px;letter-spacing:0.528px;font-size:13.2px;-webkit-text-stroke:.45px;color:#8a4ccf">Review details</span>
<svg style="left:1631.5px;top:251.5px" width="14" height="14" viewBox="0 0 14 14" fill="none" stroke="#8a4ccf" stroke-width="1.1"><circle cx="7" cy="7" r="6.2"/><path d="M5.8 4.2 8.6 7l-2.8 2.8"/></svg>
<svg style="left:1534px;top:315px" width="14" height="14" viewBox="0 0 22 22" fill="none" stroke="#1d2f3f" stroke-width="1.7"><circle cx="11" cy="11" r="9.8"/><circle cx="11" cy="8.8" r="3.6"/><path d="M4.3 18a7.5 7.5 0 0 1 13.4 0"/></svg>
<span class="t ch" style="left:1557.5px;top:322.0px;letter-spacing:0.489px">Customer Details</span>
<span class="t " style="left:1533.6px;top:355.3px;letter-spacing:0.979px;font-size:15.1px">#1100004</span>
<span class="t " style="left:1532.6px;top:383.0px;letter-spacing:0.728px;font-size:22.7px">Mrs Hannah Mason</span>
<span class="t gr" style="left:1533.6px;top:407.7px;letter-spacing:0.439px;font-size:13.2px">Landlord</span>
<span class="t " style="left:1533.6px;top:434.5px;letter-spacing:0.480px;font-size:13.2px">hannah.m@gmail.com</span>
<span class="t " style="left:1533.6px;top:455.1px;letter-spacing:0.540px;font-size:13.2px">0214980058</span>
<span class="t " style="left:1533.6px;top:474.6px;letter-spacing:0.943px;font-size:13.2px">21/01/1965</span>
<span class="t gr" style="left:1533.6px;top:501.9px;letter-spacing:0.281px;font-size:13.2px">Rating: Excellent (Low Risk)</span>
<svg style="left:1534px;top:555px" width="14" height="13" viewBox="0 0 14 13" fill="none" stroke="#1d2f3f" stroke-width="1.1"><rect x=".6" y="3.2" width="12.8" height="9" rx="1"/><path d="M4.6 3.2V1.6a.8.8 0 0 1 .8-.8h3.2a.8.8 0 0 1 .8.8v1.6M.6 7.6h12.8"/></svg>
<span class="t ch" style="left:1557.5px;top:561.9px;letter-spacing:0.580px">Account Details</span>
<span class="t " style="left:1533.6px;top:594.9px;letter-spacing:0.822px;font-size:15.1px">#320006</span>
<span class="t " style="left:1532.6px;top:623.5px;letter-spacing:0.731px;font-size:22.7px">Mr &amp; Mrs Mason</span>
<span class="t gr" style="left:1533.6px;top:647.6px;letter-spacing:0.220px;font-size:13.2px">Energise</span>
<span class="t gr" style="left:1533.6px;top:677.5px;letter-spacing:0.855px;font-size:14.3px;color:#44535f">Balance</span>
<span class="t gr" style="left:1641.6px;top:677.5px;letter-spacing:0.759px;font-size:14.3px;color:#44535f">Overdue</span>
<span class="t " style="left:1533px;top:701.2px;letter-spacing:0.697px;font-size:22.7px">$154.00</span>
<span class="t " style="left:1641px;top:701.2px;letter-spacing:0.655px;font-size:22.7px">$0.00</span>
<span class="t gr" style="left:1533.6px;top:733.9px;letter-spacing:0.460px;font-size:13.2px">Payment Method:</span>
<span class="t " style="left:1646.9px;top:733.9px;letter-spacing:0.355px;font-size:13.2px">Direct Debit</span>
<svg style="left:1533px;top:786.5px" width="16" height="15" viewBox="0 0 16 15" fill="none" stroke="#1d2f3f" stroke-width="1.1"><path d="M2.7 4.8A6.2 6.2 0 1 1 2.3 9.5"/><path d="M1 2v3.4h3.4"/><path d="M8.5 4.2V8l2.5 1.5"/></svg>
<span class="t ch" style="left:1557.5px;top:794.3px;letter-spacing:0.593px">Recent Activity</span>
<span class="t " style="left:1533.6px;top:839.6px;letter-spacing:0.954px;font-size:11.4px;color:#5b6a77">26/06/2023</span>
<span class="t " style="left:1533.6px;top:859.9px;letter-spacing:0.488px;font-size:13.2px">Customer details updated</span>
<svg style="left:1749.5px;top:853.5px" width="7" height="12" viewBox="0 0 7 12" fill="none" stroke="#1d2f3f" stroke-width="1.2"><path d="M.8.8 6 6 .8 11.2"/></svg>
<span class="t " style="left:1533.6px;top:888.6px;letter-spacing:0.954px;font-size:11.4px;color:#5b6a77">26/06/2023</span>
<span class="t " style="left:1533.6px;top:908.9px;letter-spacing:0.488px;font-size:13.2px">Customer details updated</span>
<svg style="left:1749.5px;top:902.5px" width="7" height="12" viewBox="0 0 7 12" fill="none" stroke="#1d2f3f" stroke-width="1.2"><path d="M.8.8 6 6 .8 11.2"/></svg>
<span class="t " style="left:1533.6px;top:937.6px;letter-spacing:0.954px;font-size:11.4px;color:#5b6a77">26/06/2023</span>
<span class="t " style="left:1533.6px;top:957.9px;letter-spacing:0.488px;font-size:13.2px">Customer details updated</span>
<svg style="left:1749.5px;top:951.5px" width="7" height="12" viewBox="0 0 7 12" fill="none" stroke="#1d2f3f" stroke-width="1.2"><path d="M.8.8 6 6 .8 11.2"/></svg>
<span class="t " style="left:1533.6px;top:986.6px;letter-spacing:0.954px;font-size:11.4px;color:#5b6a77">26/06/2023</span>
<span class="t " style="left:1533.6px;top:1006.9px;letter-spacing:0.488px;font-size:13.2px">Customer details updated</span>
<svg style="left:1749.5px;top:1000.5px" width="7" height="12" viewBox="0 0 7 12" fill="none" stroke="#1d2f3f" stroke-width="1.2"><path d="M.8.8 6 6 .8 11.2"/></svg>
<!--RIGHT-->

<div class="a" style="left:11px;top:1046px;width:1792px;height:74px;background:linear-gradient(97deg,#34219c 0%,#2c1b8a 10%,#24177a 22%,#2a1a8e 31%,#3a1fb0 45%,#5a22cc 60%,#7627e2 68%,#6d26de 79%,#5522d2 91%,#4a20c8 100%)"></div>
<div class="a" style="left:11px;top:1046px;width:1792px;height:74px;background:linear-gradient(165deg,rgba(120,80,255,.25) 0%,rgba(120,80,255,0) 30%)"></div>
<div class="a" style="left:604px;top:1049px;width:606px;height:66px;border-radius:15px;background:linear-gradient(90deg,#7a64e6 0%,#8262ee 45%,#9263f2 75%,#b56cf4 100%);box-shadow:inset 0 0 0 1px rgba(200,180,255,.35)"></div>
<!-- finder -->
<div class="a" style="left:614px;top:1059px;width:41px;height:41px;border-radius:9px;overflow:hidden;background:linear-gradient(#3fb3f6,#1f7fe8)"><div class="a" style="left:21px;top:0;width:20px;height:41px;background:linear-gradient(#f0f3f6,#cfd6de)"></div><div class="a" style="left:16px;top:-4px;width:12px;height:30px;border-radius:0 0 0 12px;background:linear-gradient(#f0f3f6,#dfe4ea);transform:skewX(-8deg)"></div></div>
<svg style="left:614px;top:1059px" width="41" height="41" viewBox="0 0 41 41" fill="none" stroke="#16202c" stroke-width="1.6" stroke-linecap="round"><path d="M11 13v3.5M30.5 13v3.5M7.5 26.5c7 6.5 19 6.5 26 0"/><path d="M22.5 3c-3 6-4.2 13-4.2 19h3.5c-.2 5 .2 10 1.5 16" stroke-width="1.1" stroke="#4a6a8c"/></svg>
<!-- chrome -->
<div class="a" style="left:669px;top:1059px;width:41px;height:41px;border-radius:9px;background:#f6f4fa"></div>
<div class="a" style="left:672px;top:1062px;width:35px;height:35px;border-radius:50%;background:conic-gradient(from 60deg,#f5bc2c 0 120deg,#2f9e52 120deg 240deg,#dc4a38 240deg 360deg)"></div>
<div class="a" style="left:681px;top:1071px;width:17px;height:17px;border-radius:50%;background:#fff"></div>
<div class="a" style="left:683px;top:1073px;width:13px;height:13px;border-radius:50%;background:#3d7fe6"></div>
<!-- teams -->
<div class="a" style="left:724px;top:1059px;width:41px;height:41px;border-radius:9px;background:#fff"></div>
<svg style="left:724px;top:1059px" width="41" height="41" viewBox="0 0 41 41"><circle cx="30.5" cy="12" r="2.9" fill="#4f58c0"/><path d="M26.5 17h8.5v9.5a4 4 0 0 1-4 4h-1a4 4 0 0 1-3.5-4z" fill="#5059c4"/><circle cx="21.5" cy="10.8" r="4" fill="#7b83e8"/><path d="M14 17h15v11a7 7 0 0 1-7 7h-1a7 7 0 0 1-7-7z" fill="#7b83e8"/><rect x="5.5" y="13" width="14.5" height="14.5" rx="1.5" fill="#4a53bc"/></svg>
<span class="t" style="left:739.3px;top:1079.3px;font-size:10px;font-weight:bold;color:#fff;transform:translate(-50%,-50%)">T</span>
<!-- figma -->
<div class="a" style="left:779px;top:1059px;width:41px;height:41px;border-radius:9px;background:radial-gradient(circle at 50% 55%,#2a3340 0,#15171a 70%)"></div>
<svg style="left:779px;top:1059px" width="41" height="41" viewBox="0 0 41 41"><path d="M15.5 7H20.5v9.5H15.5a4.750 4.750 0 0 1 0-9.5z" fill="#f24e1e"/><path d="M20.5 7h5a4.750 4.750 0 0 1 0 9.5h-5z" fill="#ff7262"/><path d="M15.5 16.5h5V26h-5a4.750 4.750 0 0 1 0-9.5z" fill="#a259ff"/><circle cx="25.3" cy="21.250" r="4.750" fill="#1abcfe"/><path d="M15.5 26h5v4.750A4.750 4.750 0 1 1 15.5 26z" fill="#0acf83"/></svg>
<!-- slack -->
<div class="a" style="left:834px;top:1059px;width:41px;height:41px;border-radius:9px;background:#fbfafc"></div>
<svg style="left:834px;top:1059px" width="41" height="41" viewBox="0 0 41 41" stroke-width="4.6" stroke-linecap="round" fill="none"><path d="M8.6 17.1H15.1M16.6 8.6V10.9" stroke="#36c5f0"/><path d="M24.8 8.6V16M31.7 16.6h1" stroke="#2eb67d"/><path d="M24.9 24.6H33.1M24.8 31.7v1" stroke="#ecb22e"/><path d="M16.6 25.7V33.1M8.6 24.6h1" stroke="#e01e5a"/></svg>
<div class="a" style="left:862.5px;top:1054px;width:19px;height:19px;border-radius:50%;background:#ea4a45"></div>
<div class="a" style="left:871px;top:1062.5px;width:2px;height:2px;border-radius:50%;background:#fff"></div>
<!-- forticlient shield -->
<svg style="left:888px;top:1053px" width="45" height="52" viewBox="0 0 45 52"><path d="M22.5 1.5C18 4.2 10 5.6 2.3 5.2V23C2.3 36 10 45.5 22.5 50.8 35 45.5 42.7 36 42.7 23V5.2C35 5.6 27 4.2 22.5 1.5z" fill="#f3f7fc" stroke="#4f97dc" stroke-width="1.2"/><path d="M22.5 5.8C18.5 8 12 9.2 6 9V23c0 11 6 19 16.5 23.8C33 42 39 34 39 23V9c-6 .2-12.5-1-16.5-3.2z" fill="#2d6fc0"/><g fill="#fff"><rect x="11.5" y="14" width="6" height="4.6" rx="1.8"/><rect x="19" y="14" width="7" height="4.6"/><rect x="27.5" y="14" width="6" height="4.6" rx="1.8"/><rect x="11.5" y="20.2" width="6" height="4.6"/><rect x="27.5" y="20.2" width="6" height="4.6"/><rect x="11.5" y="26.4" width="6" height="4.6" rx="1.8"/><rect x="19" y="26.4" width="7" height="4.6"/><rect x="27.5" y="26.4" width="6" height="4.6" rx="1.8"/></g><circle cx="2.5" cy="41.5" r="4.5" fill="#8d8d92"/><rect x=".5" y="40.5" width="4" height="3.2" rx=".5" fill="#d6d6da"/></svg>
<!-- settings -->
<div class="a" style="left:944px;top:1059px;width:41px;height:41px;border-radius:9px;background:linear-gradient(#d9dcdf,#85888c)"></div>
<svg style="left:944px;top:1059px" width="41" height="41" viewBox="0 0 41 41" fill="none"><circle cx="20.5" cy="20.5" r="16.5" fill="#5a5d61" stroke="#3b3d40" stroke-width="1.5" stroke-dasharray="1.6 1.3"/><circle cx="20.5" cy="20.5" r="13" fill="#8e9296" stroke="#3d3f42" stroke-width="2.2"/><circle cx="20.5" cy="20.5" r="8.5" fill="#75787c" stroke="#3d3f42" stroke-width="1"/><path d="M20.5 20.5V7.5M20.5 20.5 9.3 27M20.5 20.5 31.7 27" stroke="#2e3033" stroke-width="2"/><circle cx="20.5" cy="20.5" r="2.2" fill="#2e3033"/></svg>
<div class="a" style="left:1005px;top:1058px;width:1px;height:48px;background:rgba(40,20,120,.55)"></div>
<!-- spotify -->
<div class="a" style="left:1023.5px;top:1058.5px;width:42px;height:42px;border-radius:50%;background:#5fd068"></div>
<svg style="left:1023.5px;top:1058.5px" width="42" height="42" viewBox="0 0 42 42" fill="none" stroke="#15181a" stroke-linecap="round"><path d="M9.5 15c8-2.4 17-1.6 24 2.3" stroke-width="3.8"/><path d="M10.5 22c7-2 14.5-1.2 20.5 2.2" stroke-width="3.2"/><path d="M11.5 28.5c6-1.6 12-1 17 1.9" stroke-width="2.6"/></svg>
<!-- vscode -->
<div class="a" style="left:1079px;top:1059px;width:41px;height:41px;border-radius:9px;background:#fff"></div>
<svg style="left:1079px;top:1059px" width="41" height="41" viewBox="0 0 41 41"><path d="M28.5 9.5 8.5 26.8M28.5 31.5 8.5 14.2" stroke="#2b7bd0" stroke-width="5.2" fill="none" stroke-linecap="round"/><path d="M27.3 5.4 34.8 9v23l-7.5 3.6z" fill="#3c99f0"/><path d="M27.3 5.4v30.2l-2.6-1.8V7.2z" fill="#2568b8"/></svg>
<div class="a" style="left:1139px;top:1058px;width:1px;height:48px;background:rgba(40,20,120,.55)"></div>
<!-- trash -->
<svg style="left:1159px;top:1053px" width="42" height="50" viewBox="0 0 42 50"><defs><linearGradient id="tr" x1="0" x2="1"><stop offset="0" stop-color="#d9d6e2"/><stop offset=".5" stop-color="#f2f0f6"/><stop offset="1" stop-color="#cfcbdc"/></linearGradient></defs><path d="M3 9h36l-4 37a3 3 0 0 1-3 2.5H10a3 3 0 0 1-3-2.5z" fill="url(#tr)" opacity=".93"/><ellipse cx="21" cy="9" rx="18" ry="4" fill="#e9e7ef" stroke="#b9b5c8" stroke-width=".8"/><path d="M8 8 12 3l5 3 4-4 5 4 5-3 4 5-6 3-8-1-7 2z" fill="#f4f3f7" stroke="#9a97a8" stroke-width=".6"/><path d="M14 5l3 2M24 4l2 3M30 5l-2 3" stroke="#6a8ab0" stroke-width="1"/></svg>
<div class="a" style="left:633px;top:1109.5px;width:3px;height:3px;border-radius:50%;background:#0f0a4a"></div>
<div class="a" style="left:688px;top:1109.5px;width:3px;height:3px;border-radius:50%;background:#0f0a4a"></div>
<div class="a" style="left:743px;top:1109.5px;width:3px;height:3px;border-radius:50%;background:#0f0a4a"></div>
<div class="a" style="left:798px;top:1109.5px;width:3px;height:3px;border-radius:50%;background:#0f0a4a"></div>
<div class="a" style="left:853px;top:1109.5px;width:3px;height:3px;border-radius:50%;background:#0f0a4a"></div>
<div class="a" style="left:908px;top:1109.5px;width:3px;height:3px;border-radius:50%;background:#0f0a4a"></div>
<div class="a" style="left:1043px;top:1109.5px;width:3px;height:3px;border-radius:50%;background:#0f0a4a"></div>
<div class="a" style="left:1098px;top:1109.5px;width:3px;height:3px;border-radius:50%;background:#0f0a4a"></div>
<!--DOCK-->
</div></div>
</body>
</html>
